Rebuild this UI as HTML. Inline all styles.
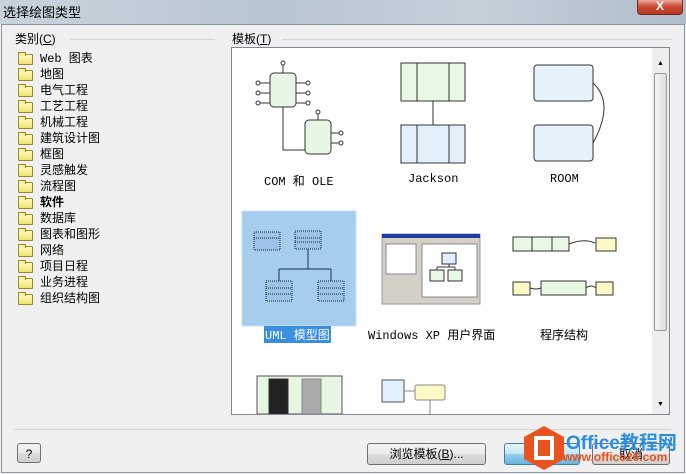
<!DOCTYPE html>
<html><head><meta charset="utf-8"><style>
*{margin:0;padding:0;box-sizing:border-box}
body{width:686px;height:474px;overflow:hidden;background:#f0f0f0;font-family:"Liberation Sans","Noto Sans CJK SC",sans-serif;font-size:12px;color:#000;position:relative}
.title{position:absolute;left:0;top:0;width:686px;height:24px;background:linear-gradient(90deg,#c9d3dc,#b8c6d3 40%,#c5d0da 70%,#aebdca);}
.title span{position:absolute;left:3px;top:2px;font-size:13px}
.close{position:absolute;left:637px;top:0;width:46px;height:15px;background:linear-gradient(#e9a99a,#c9452f 50%,#b83a22);border:1px solid #6b2a22;border-top:none;border-radius:0 0 4px 4px;color:#fff;font-weight:bold;text-align:center;font-size:12px;line-height:13px}
.frame{position:absolute;left:1px;top:24px;width:684px;height:449px;border:1px solid #8a97a3;background:#f0f0f0}
.lbl{position:absolute;font-size:12px}
.line{position:absolute;height:1px;background:#d5d5d5}
.item{position:absolute;left:18px;height:16px;line-height:16px;font-family:"Liberation Mono","Noto Sans CJK SC",monospace;font-size:12px}
.item i{position:absolute;left:0;top:3px;width:15px;height:11px;background:linear-gradient(#fffbc0,#eee070);border:1px solid #9a8a30;border-radius:1px}
.item i:before{content:"";position:absolute;left:-1px;top:-3px;width:6px;height:3px;background:#f7ef9a;border:1px solid #9a8a30;border-bottom:none}
.item b{position:absolute;left:22px;font-weight:normal;white-space:nowrap}
.box{position:absolute;left:231px;top:47px;width:439px;height:368px;background:#fff;border:1px solid #828790}
.sb{position:absolute;left:652px;top:48px;width:17px;height:366px;background:#eee}
.thumb{position:absolute;left:654px;top:73px;width:13px;height:258px;background:linear-gradient(90deg,#f4f4f4,#dcdcdc);border:1px solid #9a9a9a;border-radius:2px}
.cap{position:absolute;font-family:"Liberation Mono","Noto Sans CJK SC",monospace;font-size:12px;white-space:nowrap}
.btn{position:absolute;border:1px solid #707070;border-radius:3px;background:linear-gradient(#f2f2f2,#ebebeb 50%,#dddddd 51%,#cfcfcf);text-align:center;line-height:20px;font-size:12px}
</style></head><body>
<div class="title"><span>选择绘图类型</span></div>
<div class="close">X</div>
<div class="frame"></div>
<div class="lbl" style="left:15px;top:30px">类别(<u>C</u>)</div>
<div class="line" style="left:70px;top:39px;width:145px"></div>
<div class="lbl" style="left:232px;top:30px">模板(<u>T</u>)</div>
<div class="line" style="left:282px;top:39px;width:390px"></div>

<div class="item" style="top:51px"><i></i><b>Web 图表</b></div>
<div class="item" style="top:67px"><i></i><b>地图</b></div>
<div class="item" style="top:83px"><i></i><b>电气工程</b></div>
<div class="item" style="top:99px"><i></i><b>工艺工程</b></div>
<div class="item" style="top:115px"><i></i><b>机械工程</b></div>
<div class="item" style="top:131px"><i></i><b>建筑设计图</b></div>
<div class="item" style="top:147px"><i></i><b>框图</b></div>
<div class="item" style="top:163px"><i></i><b>灵感触发</b></div>
<div class="item" style="top:179px"><i></i><b>流程图</b></div>
<div class="item" style="top:195px"><i></i><b style="font-weight:bold">软件</b></div>
<div class="item" style="top:211px"><i></i><b>数据库</b></div>
<div class="item" style="top:227px"><i></i><b>图表和图形</b></div>
<div class="item" style="top:243px"><i></i><b>网络</b></div>
<div class="item" style="top:259px"><i></i><b>项目日程</b></div>
<div class="item" style="top:275px"><i></i><b>业务进程</b></div>
<div class="item" style="top:291px"><i></i><b>组织结构图</b></div>

<div class="box"></div>
<svg style="position:absolute;left:232px;top:48px" width="420" height="366" fill="none" stroke="#333" stroke-width="1">
<rect x="38" y="25" width="26" height="34" rx="4" fill="#e8f6e4"/>
<rect x="73" y="72" width="26" height="34" rx="4" fill="#e8f6e4"/>
<path d="M51 25v-8M38 35h-10M38 45h-10M38 55h-10M64 35h10M64 45h10M64 55h10M51 59v43h22M86 72v-6M99 85h8M99 95h8"/>
<g fill="#fff"><circle cx="51" cy="15" r="2"/><circle cx="26" cy="35" r="2"/><circle cx="26" cy="45" r="2"/><circle cx="26" cy="55" r="2"/><circle cx="76" cy="35" r="2"/><circle cx="76" cy="45" r="2"/><circle cx="76" cy="55" r="2"/><circle cx="86" cy="64" r="2"/><circle cx="109" cy="85" r="2"/><circle cx="109" cy="95" r="2"/></g>
<rect x="169" y="15" width="64" height="38" fill="#e8f8e4"/><path d="M185 15v38M217 15v38"/>
<rect x="169" y="77" width="64" height="38" fill="#e2f0fc"/><path d="M185 77v38M217 77v38M201 53v24"/>
<rect x="302" y="17" width="59" height="36" rx="3" fill="#e6f3fd"/>
<rect x="302" y="77" width="59" height="36" rx="3" fill="#e6f3fd"/>
<path d="M361 35q22 20 0 60"/>
<rect x="10" y="163" width="114" height="115" fill="#a5cdee" stroke="#c8e0f4"/>
<rect x="22" y="184" width="26" height="18" fill="#9cc4e8" stroke="#123" stroke-dasharray="1 1"/>
<rect x="63" y="183" width="26" height="18" fill="#9cc4e8" stroke="#123" stroke-dasharray="1 1"/>
<rect x="34" y="233" width="26" height="20" fill="#9cc4e8" stroke="#123" stroke-dasharray="1 1"/>
<rect x="86" y="233" width="26" height="20" fill="#9cc4e8" stroke="#123" stroke-dasharray="1 1"/>
<path d="M25 189h0M22 190h26M63 190h26M63 194h26M34 240h26M34 246h26M86 240h26M86 246h26" stroke="#123" stroke-dasharray="1 1"/>
<path d="M76 201v20M47 221h52M47 221v12M99 221v12" stroke="#135"/>
<rect x="150" y="186" width="98" height="70" fill="#d4d0c8" stroke="#999"/>
<rect x="150" y="186" width="98" height="4" fill="#1c3fa0" stroke="none"/>
<rect x="190" y="196" width="55" height="53" fill="#fff" stroke="#888"/>
<rect x="154" y="196" width="30" height="30" fill="#fff" stroke="#888"/>
<rect x="210" y="205" width="14" height="11" fill="#dfeefb"/><rect x="198" y="222" width="14" height="11" fill="#e8f8e4"/><rect x="216" y="222" width="14" height="11" fill="#e8f8e4"/>
<path d="M217 216v3M205 219h18M205 219v3M223 219v3"/>
<rect x="281" y="189" width="56" height="14" fill="#e8f8e4"/><path d="M300 189v14M320 189v14M337 196q15-6 26-1"/>
<rect x="364" y="190" width="20" height="13" fill="#fdf8c4"/>
<rect x="281" y="234" width="17" height="13" fill="#fdf8c4"/>
<rect x="309" y="233" width="45" height="14" fill="#e8f8e4"/><path d="M298 240q6 2 11 0M354 240q5-4 10 0"/>
<rect x="364" y="234" width="17" height="13" fill="#fdf8c4"/>
<rect x="25" y="328" width="85" height="38" fill="#e8f6e4" stroke="#555"/>
<rect x="37" y="331" width="19" height="35" fill="#222"/><rect x="70" y="331" width="19" height="35" fill="#aaa" stroke="#888"/>
<rect x="150" y="332" width="22" height="22" fill="#e2f0fc" stroke="#555"/>
<rect x="183" y="337" width="30" height="15" rx="2" fill="#fdf8c4" stroke="#888"/>
<path d="M172 343h11M198 352v14" stroke="#888"/>
</svg>
<div class="cap" style="left:264px;top:172px">COM 和 OLE</div>
<div class="cap" style="left:408px;top:172px">Jackson</div>
<div class="cap" style="left:550px;top:172px">ROOM</div>
<div class="cap" style="left:264px;top:326px;background:#3a8ee0;color:#fff;padding:0 1px">UML 模型图</div>
<div class="cap" style="left:368px;top:326px">Windows XP 用户界面</div>
<div class="cap" style="left:540px;top:326px">程序结构</div>

<div class="sb"></div>
<div class="thumb"></div>
<div style="position:absolute;left:657px;top:60px;font-size:7px">▲</div>
<div style="position:absolute;left:657px;top:401px;font-size:7px">▼</div>

<div class="line" style="left:14px;top:429px;width:657px"></div>
<div class="btn" style="left:17px;top:443px;width:24px;height:20px">?</div>
<div class="btn" style="left:367px;top:443px;width:119px;height:22px">浏览模板(<u>B</u>)...</div>
<div class="btn" style="left:504px;top:443px;width:76px;height:22px;border-color:#3c7fb1;background:linear-gradient(#e5f4fc,#c4e5f6 50%,#98d1ef 51%,#68b3db)"></div>
<div class="btn" style="left:592px;top:443px;width:78px;height:22px">取消</div>
<svg style="position:absolute;left:522px;top:424px" width="44" height="48"><polygon points="22,2 42,13 42,35 22,46 2,35 2,13" fill="#e8531f"/><rect x="14" y="14" width="16" height="20" fill="none" stroke="#fff" stroke-width="4"/></svg>
<div style="position:absolute;left:566px;top:428px;color:#2a8de0;font-weight:bold;font-size:19px;white-space:nowrap">Office教程网</div>
<div style="position:absolute;left:563px;top:450px;color:#e8531f;font-weight:bold;font-size:12px;white-space:nowrap">www.office26.com</div>
</body></html>
